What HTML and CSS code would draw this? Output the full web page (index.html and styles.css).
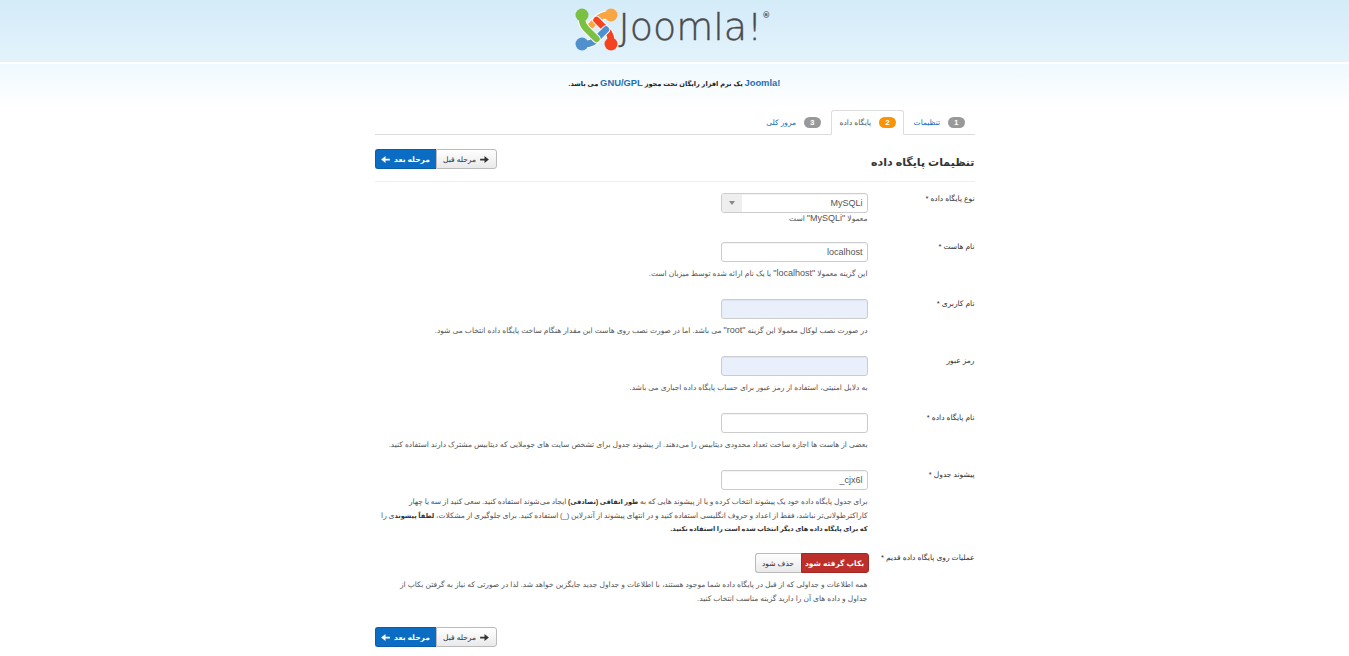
FILE: index.html
```html
<!DOCTYPE html>
<html lang="fa" dir="rtl">
<head>
<meta charset="utf-8">
<title>Joomla</title>
<link rel="stylesheet" href="styles.css">
</head>
<body>
<header class="top">
  <div class="brand" dir="ltr">
    <svg class="mark" viewBox="0 0 50 50" width="50" height="50" aria-hidden="true">
      <g fill="none" stroke-linecap="round" stroke-linejoin="round">
        <path d="M39 10 H35 Q30 10 25.5 14 L15 24.5" stroke="#fff" stroke-width="8.5"/>
        <path d="M39 10 H35 Q30 10 25.5 14 L15 24.5" stroke="#f9a541" stroke-width="6.5"/>
        <path d="M39 39 V35 Q39 30 35 25.5 L24.5 15" stroke="#fff" stroke-width="8.5"/>
        <path d="M39 39 V35 Q39 30 35 25.5 L24.5 15" stroke="#f44321" stroke-width="6.5"/>
        <path d="M10 39 H14 Q19 39 23.5 35 L34 24.5" stroke="#fff" stroke-width="8.5"/>
        <path d="M10 39 H14 Q19 39 23.5 35 L34 24.5" stroke="#5091cd" stroke-width="6.5"/>
        <path d="M10 10 V14 Q10 19 14 23.5 L24.5 34" stroke="#fff" stroke-width="8.5"/>
        <path d="M10 10 V14 Q10 19 14 23.5 L24.5 34" stroke="#7ac143" stroke-width="6.5"/>
      </g>
      <circle cx="10" cy="10" r="6.5" fill="#7ac143"/>
      <circle cx="39" cy="10" r="6.5" fill="#f9a541"/>
      <circle cx="10" cy="39" r="6.5" fill="#5091cd"/>
      <circle cx="39" cy="39" r="6.5" fill="#f44321"/>
    </svg>
    <span class="word">Joomla!<sup class="reg">®</sup></span>
  </div>
</header>
<div class="tagline">
  <p><a href="#" dir="ltr">Joomla!</a> یک نرم افزار رایگان تحت مجوز <a href="#" dir="ltr">GNU/GPL</a> می باشد.</p>
</div>
<main class="wrap">
  <nav class="tabs">
    <a class="tab" href="#"><span class="num">1</span> تنظیمات</a>
    <a class="tab active" href="#"><span class="num warn">2</span> پایگاه داده</a>
    <a class="tab" href="#"><span class="num">3</span> مرور کلی</a>
  </nav>
  <div class="titlebar">
    <h1>تنظیمات پایگاه داده</h1>
    <div class="group">
      <a class="btn" href="#"><svg class="arrow" viewBox="0 0 10 8" width="9" height="7"><path d="M0 3h5V0l5 4-5 4V5H0z" fill="#333"/></svg>مرحله قبل</a>
      <a class="btn primary" href="#">مرحله بعد<svg class="arrow" viewBox="0 0 10 8" width="9" height="7"><path d="M10 3H5V0L0 4l5 4V5h5z" fill="#fff"/></svg></a>
    </div>
  </div>
  <form class="form">
    <div class="row tight">
      <label>نوع پایگاه داده *</label>
      <div class="ctl">
        <div class="select"><span class="val">MySQLi</span><span class="caret"></span></div>
        <p class="help first">معمولا <span class="lat">"MySQLi"</span> است</p>
      </div>
    </div>
    <div class="row">
      <label>نام هاست *</label>
      <div class="ctl">
        <input class="input" value="localhost" dir="ltr">
        <p class="help">این گزینه معمولا <span class="lat">"localhost"</span> یا یک نام ارائه شده توسط میزبان است.</p>
      </div>
    </div>
    <div class="row">
      <label>نام کاربری *</label>
      <div class="ctl">
        <input class="input filled">
        <p class="help">در صورت نصب لوکال معمولا این گزینه <span class="lat">"root"</span> می باشد. اما در صورت نصب روی هاست این مقدار هنگام ساخت پایگاه داده انتخاب می شود.</p>
      </div>
    </div>
    <div class="row">
      <label>رمز عبور</label>
      <div class="ctl">
        <input class="input filled">
        <p class="help">به دلایل امنیتی، استفاده از رمز عبور برای حساب پایگاه داده اجباری می باشد.</p>
      </div>
    </div>
    <div class="row">
      <label>نام پایگاه داده *</label>
      <div class="ctl">
        <input class="input">
        <p class="help">بعضی از هاست ها اجازه ساخت تعداد محدودی دیتابیس را می‌دهند. از پیشوند جدول برای تشخص سایت های جوملایی که دیتابیس مشترک دارند استفاده کنید.</p>
      </div>
    </div>
    <div class="row long">
      <label>پیشوند جدول *</label>
      <div class="ctl">
        <input class="input" value="_cjx6l" dir="ltr">
        <p class="help">برای جدول پایگاه داده خود یک پیشوند انتخاب کرده و یا از پیشوند هایی که به <b>طور اتفاقی (تصادفی)</b> ایجاد می‌شوند استفاده کنید. سعی کنید از سه یا چهار<br>کاراکترطولانی‌تر نباشد، فقط از اعداد و حروف انگلیسی استفاده کنید و در انتهای پیشوند از آندرلاین (_) استفاده کنید. برای جلوگیری از مشکلات، <b>لطفاً پیشوند</b>ی را<br><b>که برای پایگاه داده های دیگر انتخاب شده است را استفاده نکنید.</b></p>
      </div>
    </div>
    <div class="row last">
      <label>عملیات روی پایگاه داده قدیم *</label>
      <div class="ctl">
        <div class="group radios">
          <a class="btn danger" href="#">بکاپ گرفته شود</a>
          <a class="btn" href="#">حذف شود</a>
        </div>
        <p class="help roomy">همه اطلاعات و جداولی که از قبل در پایگاه داده شما موجود هستند، با اطلاعات و جداول جدید جایگزین خواهد شد. لذا در صورتی که نیاز به گرفتن بکاپ از<br>جداول و داده های آن را دارید گزینه مناسب انتخاب کنید.</p>
      </div>
    </div>
  </form>
  <div class="foot">
    <div class="group">
      <a class="btn" href="#"><svg class="arrow" viewBox="0 0 10 8" width="9" height="7"><path d="M0 3h5V0l5 4-5 4V5H0z" fill="#333"/></svg>مرحله قبل</a>
      <a class="btn primary" href="#">مرحله بعد<svg class="arrow" viewBox="0 0 10 8" width="9" height="7"><path d="M10 3H5V0L0 4l5 4V5h5z" fill="#fff"/></svg></a>
    </div>
  </div>
</main>
</body>
</html>
```

FILE: styles.css
```css
* { box-sizing: border-box; }
html, body { margin: 0; padding: 0; }
body {
  background: #fff;
  color: #333;
  font-family: "Liberation Sans", "DejaVu Sans", sans-serif;
  font-size: 8px;
  line-height: 13px;
  overflow: hidden;
}
a { color: #0f6cb8; text-decoration: none; }
p { margin: 0; }

.top {
  height: 64px;
  background: linear-gradient(#d4ebf8, #e3f3fc);
  border-bottom: 2px solid #fff;
  display: flex;
  justify-content: center;
}
.brand {
  display: flex;
  align-items: flex-start;
  width: 204px;
  margin-right: 2px;
  padding-top: 5px;
  color: #4a4a4c;
}
.mark { flex: none; }
.word {
  font-family: "DejaVu Sans ExtraLight", "DejaVu Sans", sans-serif;
  font-weight: 200;
  font-size: 38px;
  line-height: 44px;
  margin-left: -3px;
  white-space: nowrap;
  -webkit-text-stroke: 0.4px #4a4a4c;
}
.reg { font-size: 8px; line-height: 8px; vertical-align: 22px; font-weight: bold; -webkit-text-stroke: 0; }

.tagline {
  height: 44px;
  background: linear-gradient(#eff9fe, #fff);
  display: flex;
  justify-content: center;
  padding-top: 12px;
  font-weight: bold;
  color: #222;
  font-size: 6.6px;
}
.tagline a { color: #1f6fb5; font-size: 9.4px; }

.wrap { width: 600px; margin: 0 auto; }

.tabs {
  display: flex;
  height: 26px;
  margin-top: 1px;
  border-bottom: 1px solid #ddd;
}
.tab {
  display: flex;
  align-items: center;
  gap: 8px;
  height: 24px;
  padding: 0 10px;
  margin-top: 1px;
  white-space: nowrap;
  font-size: 7.5px;
}
.tab.active {
  height: 25px;
  padding: 0 7px 0 8px;
  color: #555;
  background: #fff;
  border: 1px solid #ddd;
  border-bottom-color: #fff;
  border-radius: 3px 3px 0 0;
}
.num {
  display: inline-block;
  background: #999;
  color: #fff;
  font-weight: bold;
  font-size: 8px;
  line-height: 11px;
  padding: 0 6px;
  border-radius: 8px;
}
.num.warn { background: #f89406; }

.titlebar {
  display: flex;
  justify-content: space-between;
  align-items: flex-start;
  height: 47px;
  padding-top: 14px;
  border-bottom: 1px solid #eee;
}
h1 {
  margin: 5px 0 0;
  font-size: 11px;
  line-height: 16px;
  font-weight: bold;
  color: #333;
  white-space: nowrap;
}
.group { display: flex; }
.btn {
  display: flex;
  align-items: center;
  justify-content: center;
  gap: 4px;
  height: 20px;
  width: 61px;
  border: 1px solid #bbb;
  background: linear-gradient(#fff, #e9e9e9);
  color: #333;
  font-size: 7.5px;
  white-space: nowrap;
}
.btn:first-child { border-radius: 0 3px 3px 0; }
.btn:last-child { border-radius: 3px 0 0 3px; border-right: 0; }
.btn.primary {
  background: #0b6cc4;
  border-color: #0a5ea8;
  color: #fff;
  font-weight: bold;
}
.btn.danger {
  background: #bd2f2b;
  border-color: #a52622;
  color: #fff;
  font-weight: bold;
  width: 68px;
  margin-right: -1px;
}
.radios .btn:last-child { width: 46px; }
.arrow { flex: none; }

.form { padding-top: 11px; }
.row {
  display: grid;
  grid-template-columns: 107px 493px;
  height: 57px;
}
.row.tight { height: 49px; }
.row.long { height: 83px; }
.row.last { height: 74px; }
label { line-height: 13px; white-space: nowrap; font-size: 7.5px; color: #333; margin-top: -2px; }
.row.tight label { margin-top: -1px; }
.ctl { min-width: 0; }
.input, .select {
  display: block;
  width: 147px;
  height: 20px;
  border: 1px solid #ccc;
  border-radius: 3px;
  background: #fff;
  font-family: inherit;
  font-size: 9px;
  color: #555;
  padding: 0 4px;
  text-align: right;
  outline: none;
  box-shadow: inset 0 1px 1px rgba(0,0,0,.05);
}
.input.filled { background: #eaf0fb; }
.select {
  display: flex;
  align-items: center;
  justify-content: space-between;
  padding: 0;
  overflow: hidden;
}
.val { padding-right: 4px; }
.caret {
  display: flex;
  align-items: center;
  justify-content: center;
  width: 20px;
  height: 100%;
  background: #eee;
}
.caret::before {
  content: "";
  border: 3px solid transparent;
  border-top: 4px solid #888;
  border-bottom: 0;
}
.help {
  margin-top: 5px;
  font-size: 7.5px;
  line-height: 13.5px;
  color: #555;
  white-space: nowrap;
}
.lat { font-size: 9px; }
.help.first { margin-top: 0; line-height: 10px; }
.help.roomy { line-height: 14px; }
.help b { color: #333; font-size: 6.6px; }
.long .help { word-spacing: -0.35px; }
.foot { display: flex; justify-content: flex-end; }
```
